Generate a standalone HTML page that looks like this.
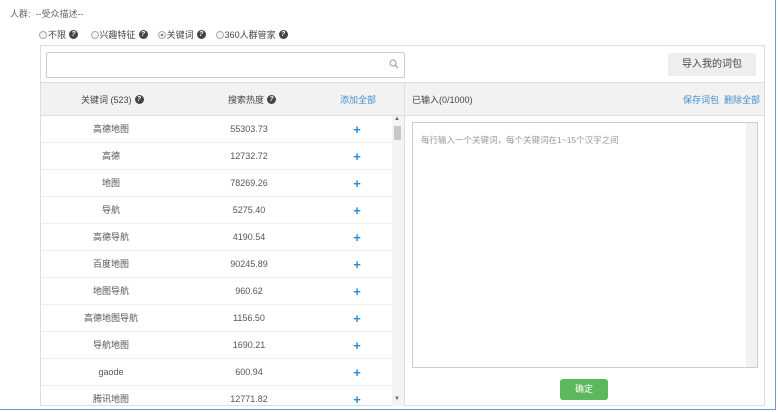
<!DOCTYPE html>
<html><head><meta charset="utf-8"><style>
*{box-sizing:border-box;margin:0;padding:0}
body{width:778px;height:412px;overflow:hidden;background:#fff;font-family:"Liberation Sans","Noto Sans CJK SC",sans-serif;font-size:9px;color:#555;position:relative}
.frame{position:absolute;left:0;top:0;width:776px;height:410px;border:1px solid #6d98c8;border-left:none;border-top:none}
.a{position:absolute}
.q{display:inline-block;width:9px;height:9px;border-radius:50%;background:#444;color:#fff;font-size:7px;line-height:9px;text-align:center;font-weight:bold;vertical-align:middle;margin-left:3px;position:relative;top:-1px}
.r{display:inline-block;width:8px;height:8px;border-radius:50%;border:1px solid #aaa;vertical-align:middle;margin-right:1px;position:relative;top:-1px;background:#f4f4f4}
.r.on:after{content:"";position:absolute;left:2px;top:2px;width:2px;height:2px;background:#444;border-radius:50%}
.panel{left:40px;top:45px;width:725px;height:361px;border:1px solid #ddd}
.row{position:absolute;left:0;width:351px;height:27px;border-bottom:1px solid #eee;line-height:27px}
.row span{position:absolute;text-align:center}
.plus{color:#2a8ad0;font-weight:bold;font-size:13px}
.blue{color:#3f8fd2}
</style></head><body>
<div class="frame"></div>
<div class="a" style="left:10px;top:7px;color:#666">人群:&nbsp;&nbsp;--受众描述--</div>
<div class="a" style="left:39px;top:28px;color:#444"><i class="r"></i>不限<i class="q">?</i>&nbsp;&nbsp;&nbsp;&nbsp;&nbsp;<i class="r"></i>兴趣特征<i class="q">?</i>&nbsp;&nbsp;&nbsp;&nbsp;<i class="r on"></i>关键词<i class="q">?</i>&nbsp;&nbsp;&nbsp;&nbsp;<i class="r"></i>360人群管家<i class="q">?</i></div>
<div class="a panel">
 <div class="a" style="left:5px;top:6px;width:359px;height:26px;border:1px solid #ccc;border-radius:2px"></div>
 <svg class="a" style="left:348px;top:13px" width="10" height="10" viewBox="0 0 10 10"><circle cx="4" cy="4" r="3" fill="none" stroke="#aaa" stroke-width="1.2"/><path d="M6.2 6.2L9 9" stroke="#aaa" stroke-width="1.4"/></svg>
 <div class="a" style="left:627px;top:7px;width:88px;height:23px;background:#eee;border-radius:2px;text-align:center;line-height:23px;color:#444;font-size:10px">导入我的词包</div>
 <div class="a" style="left:0;top:36px;width:723px;height:34px;background:#f2f2f2;border-top:1px solid #ddd;border-bottom:1px solid #ddd"></div>
 <div class="a" style="left:363px;top:36px;width:1px;height:324px;background:#ddd"></div>
 <div class="a" style="left:40px;top:47px;color:#444">关键词 (523)<i class="q">?</i></div>
 <div class="a" style="left:187px;top:47px;color:#444">搜索热度<i class="q">?</i></div>
 <div class="a blue" style="left:299px;top:47px">添加全部</div>
 <div class="a" style="left:371px;top:47px;color:#444">已输入(0/1000)</div>
 <div class="a blue" style="left:642px;top:47px">保存词包&nbsp;&nbsp;删除全部</div>
 <div class="a" style="left:0;top:70px;width:363px;height:290px;overflow:hidden">
  <div class="row" style="top:0"><span style="left:20px;width:100px">高德地图</span><span style="left:158px;width:100px">55303.73</span><span class="plus" style="left:306px;width:20px">+</span></div>
  <div class="row" style="top:27px"><span style="left:20px;width:100px">高德</span><span style="left:158px;width:100px">12732.72</span><span class="plus" style="left:306px;width:20px">+</span></div>
  <div class="row" style="top:54px"><span style="left:20px;width:100px">地图</span><span style="left:158px;width:100px">78269.26</span><span class="plus" style="left:306px;width:20px">+</span></div>
  <div class="row" style="top:81px"><span style="left:20px;width:100px">导航</span><span style="left:158px;width:100px">5275.40</span><span class="plus" style="left:306px;width:20px">+</span></div>
  <div class="row" style="top:108px"><span style="left:20px;width:100px">高德导航</span><span style="left:158px;width:100px">4190.54</span><span class="plus" style="left:306px;width:20px">+</span></div>
  <div class="row" style="top:135px"><span style="left:20px;width:100px">百度地图</span><span style="left:158px;width:100px">90245.89</span><span class="plus" style="left:306px;width:20px">+</span></div>
  <div class="row" style="top:162px"><span style="left:20px;width:100px">地图导航</span><span style="left:158px;width:100px">960.62</span><span class="plus" style="left:306px;width:20px">+</span></div>
  <div class="row" style="top:189px"><span style="left:20px;width:100px">高德地图导航</span><span style="left:158px;width:100px">1156.50</span><span class="plus" style="left:306px;width:20px">+</span></div>
  <div class="row" style="top:216px"><span style="left:20px;width:100px">导航地图</span><span style="left:158px;width:100px">1690.21</span><span class="plus" style="left:306px;width:20px">+</span></div>
  <div class="row" style="top:243px"><span style="left:20px;width:100px">gaode</span><span style="left:158px;width:100px">600.94</span><span class="plus" style="left:306px;width:20px">+</span></div>
  <div class="row" style="top:270px"><span style="left:20px;width:100px">腾讯地图</span><span style="left:158px;width:100px">12771.82</span><span class="plus" style="left:306px;width:20px">+</span></div>
  <div class="a" style="left:351px;top:0;width:12px;height:290px;background:#f4f4f4"></div>
  <div class="a" style="left:353px;top:10px;width:7px;height:14px;background:#c8c8c8"></div>
  <div class="a" style="left:353px;top:0;font-size:6px;color:#666">▲</div>
  <div class="a" style="left:353px;top:280px;font-size:6px;color:#666">▼</div>
 </div>
 <div class="a" style="left:371px;top:76px;width:346px;height:246px;border:1px solid #ccc;padding:11px 8px;color:#999;font-size:8.5px">每行输入一个关键词，每个关键词在1~15个汉字之间</div>
 <div class="a" style="left:705px;top:77px;width:11px;height:244px;background:#f2f2f2"></div>
 <div class="a" style="left:519px;top:333px;width:48px;height:21px;background:#5cb85c;border-radius:3px;color:#fff;text-align:center;line-height:21px">确定</div>
</div>
</body></html>
